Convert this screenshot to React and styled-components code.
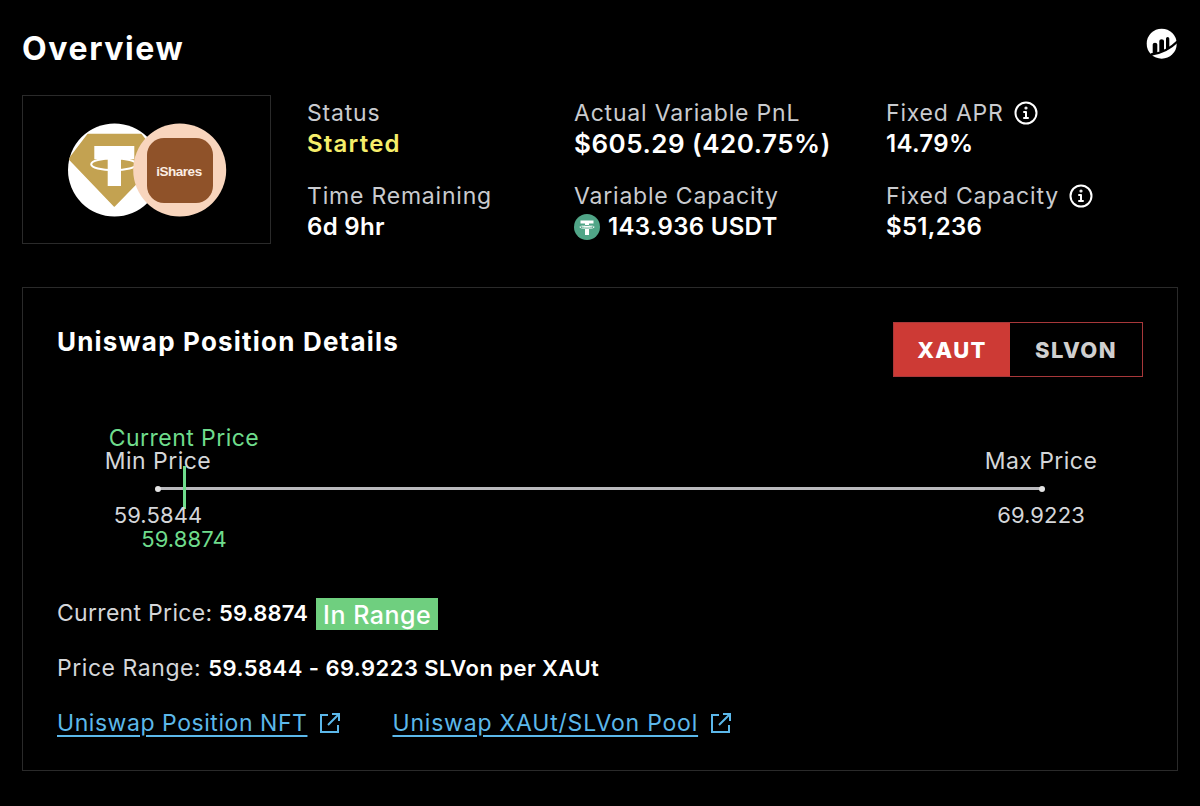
import React from "react";
import styled, { createGlobalStyle } from "styled-components";

const Global = createGlobalStyle`
  html, body { margin: 0; padding: 0; background: #000; }
  body { font-family: "Inter", "Open Sans", sans-serif; color: #fff; }
`;

const Page = styled.div`
  width: 1200px;
  height: 806px;
  box-sizing: border-box;
  padding: 29px 22px 0;
  overflow: hidden;
  background: #000;
`;

const Header = styled.div`
  display: flex;
  justify-content: space-between;
  align-items: flex-start;
  height: 66px;
`;

const Title = styled.h1`
  margin: 0;
  font-size: 32px;
  line-height: 40px;
  font-weight: 700;
  letter-spacing: 1.6px;
`;

const LogoMark = styled.svg`
  margin: -3px -1px 0 0;
`;

const Summary = styled.div`
  display: flex;
  height: 149px;
`;

const LogoBox = styled.div`
  width: 249px;
  height: 149px;
  box-sizing: border-box;
  margin-right: 36px;
  border: 1px solid #2a2a2a;
  display: flex;
  align-items: center;
  justify-content: center;
  flex-shrink: 0;
`;

const StatColumn = styled.div`
  width: ${(p) => p.$width}px;
  display: flex;
  flex-direction: column;
  gap: 22px;
  padding-top: 3px;
`;

const Stat = styled.div`
  display: flex;
  flex-direction: column;
`;

const Label = styled.div`
  display: flex;
  align-items: center;
  gap: 10px;
  font-size: 23px;
  line-height: 30px;
  letter-spacing: 0.8px;
  color: #c9cbcf;
  white-space: nowrap;
`;

const Value = styled.div`
  display: flex;
  align-items: center;
  gap: 8px;
  font-size: ${(p) => p.$size || 24}px;
  line-height: 31px;
  font-weight: 600;
  letter-spacing: ${(p) => p.$track || 0.3}px;
  color: ${(p) => p.$color || "#fff"};
  white-space: nowrap;
`;

const Card = styled.section`
  width: 1156px;
  height: 484px;
  box-sizing: border-box;
  margin-top: 43px;
  border: 1px solid #2a2a2a;
  padding: 34px 34px 0;
`;

const CardHead = styled.div`
  display: flex;
  justify-content: space-between;
  align-items: flex-start;
  height: 56px;
`;

const CardTitle = styled.h2`
  margin: 2px 0 0;
  font-size: 26px;
  line-height: 36px;
  font-weight: 700;
  letter-spacing: 1.2px;
`;

const Toggle = styled.div`
  display: flex;
  height: 55px;
  width: 250px;
  box-sizing: border-box;
  border: 1px solid #a8383a;
`;

const ToggleItem = styled.div`
  flex: ${(p) => (p.$active ? "0 0 116px" : "1")};
  display: flex;
  align-items: center;
  justify-content: center;
  padding-top: 1px;
  background: ${(p) => (p.$active ? "#cd3a35" : "transparent")};
  color: ${(p) => (p.$active ? "#fff" : "#cfcfcf")};
  font-size: 22px;
  font-weight: 800;
  letter-spacing: 1.4px;
`;

const Range = styled.div`
  position: relative;
  height: 200px;
  margin-top: 7px;
`;

const Mark = styled.div`
  position: absolute;
  top: ${(p) => p.$top}px;
  left: ${(p) => p.$left}px;
  transform: translateX(-50%);
  font-size: 23px;
  line-height: 28px;
  letter-spacing: 0.45px;
  color: ${(p) => (p.$green ? "#6fdc8c" : "#d4d6d9")};
  white-space: nowrap;
`;

const PriceMark = styled(Mark)`
  font-size: 22px;
  letter-spacing: 0.1px;
`;

const Track = styled.div`
  position: absolute;
  left: 101px;
  top: 102px;
  width: 884px;
  height: 3px;
  background: #b9b9bd;
  &::before,
  &::after {
    content: "";
    position: absolute;
    top: -1.5px;
    width: 6px;
    height: 6px;
    border-radius: 50%;
    background: #e4e4e4;
  }
  &::before { left: -3px; }
  &::after { right: -3px; }
`;

const Needle = styled.div`
  position: absolute;
  left: 126px;
  top: 81px;
  width: 3px;
  height: 43px;
  background: #6fdc8c;
`;

const Lines = styled.div`
  display: flex;
  flex-direction: column;
  gap: 24px;
  margin-top: 12px;
`;

const Line = styled.div`
  display: flex;
  align-items: center;
  height: 31px;
  font-size: 23px;
  letter-spacing: ${(p) => p.$track || 0.3}px;
  color: #d4d6d9;
  white-space: pre;
`;

const Strong = styled.span`
  font-size: 22px;
  font-weight: 600;
  letter-spacing: ${(p) => p.$track || 0.15}px;
  color: #fff;
`;

const Badge = styled.span`
  display: inline-flex;
  align-items: center;
  height: 32px;
  padding: 2px 7px 0;
  box-sizing: border-box;
  margin: 2px 0 0 8px;
  background: #6fcf7f;
  color: #fff;
  font-size: 25px;
  font-weight: 500;
  letter-spacing: 0.5px;
`;

const Links = styled.div`
  display: flex;
  align-items: center;
  height: 31px;
  gap: 51px;
`;

const Anchor = styled.a`
  display: flex;
  align-items: center;
  gap: 12px;
  color: #5cb8ea;
  font-size: 23px;
  letter-spacing: ${(p) => p.$track}px;
  white-space: nowrap;
  span {
    text-decoration: underline;
    text-underline-offset: 4px;
    text-decoration-thickness: 2px;
  }
`;

const TokenPair = () => (
  <svg width="160" height="94" viewBox="0 0 160 94">
    <defs>
      <clipPath id="coin">
        <circle cx="47.5" cy="47" r="46.5" />
      </clipPath>
    </defs>
    <circle cx="47.5" cy="47" r="46.5" fill="#fff" />
    <path d="M21 11.5 H74 L93 36 L47.3 83 L2.3 36 Z" fill="#c3a251" stroke="#c3a251" strokeWidth="1.5" strokeLinejoin="round" clipPath="url(#coin)" />
    <path d="M27.3 23 H67.3 V36.3 H54 V63 H40.7 V36.3 H27.3 Z" fill="#fff" />
    <ellipse cx="46.7" cy="41.3" rx="22.5" ry="6" fill="none" stroke="#fff" strokeWidth="2" />
    <circle cx="112.7" cy="47" r="46.5" fill="#f8d5bd" />
    <rect x="80" y="15" width="66" height="65" rx="17" fill="#8f5229" />
    <text x="112" y="53" textAnchor="middle" fontFamily="Liberation Sans" fontWeight="700" fontSize="13.5" letterSpacing="-0.5" fill="#fbeee3">iShares</text>
  </svg>
);

const TetherIcon = () => (
  <svg width="26" height="26" viewBox="0 0 26 26">
    <circle cx="13" cy="13" r="13" fill="#50a587" />
    <path d="M6.5 6.5 H19.5 V9.5 H15 V11 C18 11.2 20.5 12 20.5 13 C20.5 14 18 14.8 15 15 V21 H11 V15 C8 14.8 5.5 14 5.5 13 C5.5 12 8 11.2 11 11 V9.5 H6.5 Z" fill="#fff" />
    <ellipse cx="13" cy="12.8" rx="6.5" ry="1.3" fill="none" stroke="#50a587" strokeWidth="0.9" />
  </svg>
);

const InfoIcon = () => (
  <svg width="24" height="24" viewBox="0 0 24 24" fill="none" stroke="#fff" strokeWidth="2" strokeLinecap="round">
    <circle cx="12" cy="12" r="10.5" />
    <path d="M12 11 V17 M10 11 H12 M10 17 H14" />
    <circle cx="12" cy="7" r="0.6" fill="#fff" />
  </svg>
);

const ChartLogo = () => (
  <LogoMark width="34" height="34" viewBox="0 0 34 34">
    <circle cx="16.7" cy="17.7" r="15" fill="#fff" />
    <path d="M7.7 18.5 Q7.7 16.7 10 16.7 Q12.3 16.7 12.3 18.5 V27.5 H7.7 Z M14.3 15 Q14.3 13.3 16.6 13.3 Q19 13.3 19 15 V25.5 H14.3 Z M21 12.5 Q21 11 22.6 11 Q24.3 11 24.3 12.5 V23 H21 Z" fill="#000" />
    <path d="M6 28.5 Q21 27 33 15" fill="none" stroke="#000" strokeWidth="2.4" />
  </LogoMark>
);

const ExternalIcon = () => (
  <svg width="22" height="22" viewBox="0 0 22 22" fill="none" stroke="#5cb8ea" strokeWidth="2">
    <path d="M9 3 H2 V20 H19 V13" />
    <path d="M9 13 L19.5 2.5 M13 2 H20 V9" />
  </svg>
);

export default function App() {
  return (
    <Page>
      <Global />
      <Header>
        <Title>Overview</Title>
        <ChartLogo />
      </Header>
      <Summary>
        <LogoBox>
          <TokenPair />
        </LogoBox>
        <StatColumn $width={267}>
          <Stat>
            <Label>Status</Label>
            <Value $color="#f6ee6a" $track={1.2}>Started</Value>
          </Stat>
          <Stat>
            <Label>Time Remaining</Label>
            <Value>6d 9hr</Value>
          </Stat>
        </StatColumn>
        <StatColumn $width={312}>
          <Stat>
            <Label>Actual Variable PnL</Label>
            <Value $size={26} $track={0.5}>$605.29 (420.75%)</Value>
          </Stat>
          <Stat>
            <Label>Variable Capacity</Label>
            <Value>
              <TetherIcon />
              143.936 USDT
            </Value>
          </Stat>
        </StatColumn>
        <StatColumn $width={280}>
          <Stat>
            <Label>
              Fixed APR
              <InfoIcon />
            </Label>
            <Value>14.79%</Value>
          </Stat>
          <Stat>
            <Label>
              Fixed Capacity
              <InfoIcon />
            </Label>
            <Value>$51,236</Value>
          </Stat>
        </StatColumn>
      </Summary>
      <Card>
        <CardHead>
          <CardTitle>Uniswap Position Details</CardTitle>
          <Toggle>
            <ToggleItem $active>XAUT</ToggleItem>
            <ToggleItem>SLVON</ToggleItem>
          </Toggle>
        </CardHead>
        <Range>
          <Mark $green $left={127} $top={39}>Current Price</Mark>
          <Mark $left={101} $top={62}>Min Price</Mark>
          <Mark $left={984} $top={62}>Max Price</Mark>
          <Track />
          <Needle />
          <PriceMark $left={101} $top={116}>59.5844</PriceMark>
          <PriceMark $left={984} $top={116}>69.9223</PriceMark>
          <PriceMark $green $left={127} $top={140}>59.8874</PriceMark>
        </Range>
        <Lines>
          <Line>
            Current Price: <Strong>59.8874</Strong>
            <Badge>In Range</Badge>
          </Line>
          <Line $track={0.55}>
            Price Range: <Strong $track={0.45}>59.5844 - 69.9223 SLVon per XAUt</Strong>
          </Line>
          <Links>
            <Anchor $track={0.55}>
              <span>Uniswap Position NFT</span>
              <ExternalIcon />
            </Anchor>
            <Anchor $track={0.8}>
              <span>Uniswap XAUt/SLVon Pool</span>
              <ExternalIcon />
            </Anchor>
          </Links>
        </Lines>
      </Card>
    </Page>
  );
}
